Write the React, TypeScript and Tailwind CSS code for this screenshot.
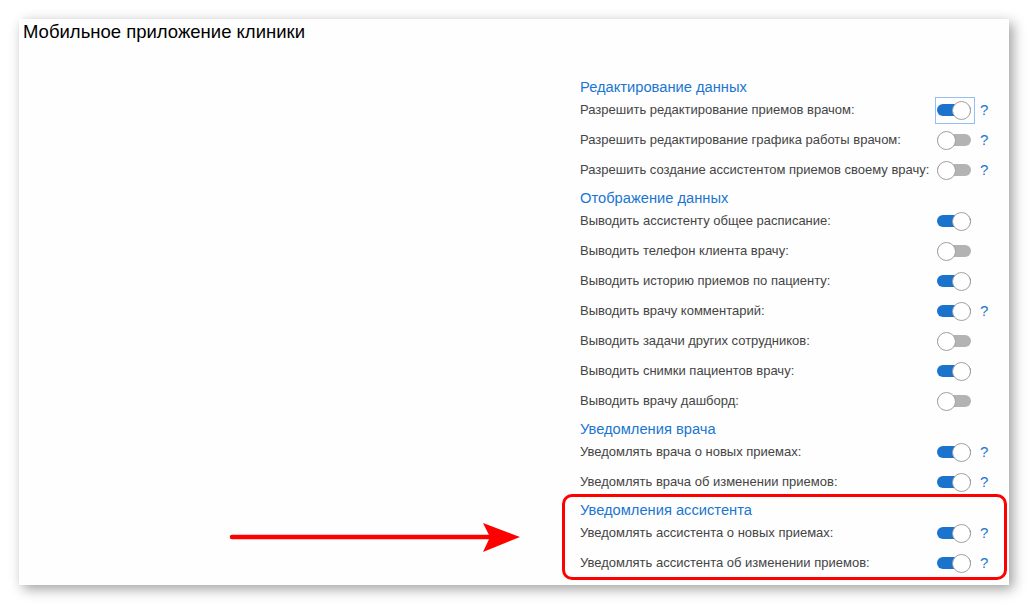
import React from 'react';

interface SettingRow {
    label: string;
    on: boolean;
    help?: boolean;
    focused?: boolean;
}

interface SettingSection {
    title: string;
    rows: SettingRow[];
}

const sections: SettingSection[] = [
    {
        title: 'Редактирование данных',
        rows: [
            { label: 'Разрешить редактирование приемов врачом:', on: true, help: true, focused: true },
            { label: 'Разрешить редактирование графика работы врачом:', on: false, help: true },
            { label: 'Разрешить создание ассистентом приемов своему врачу:', on: false, help: true },
        ],
    },
    {
        title: 'Отображение данных',
        rows: [
            { label: 'Выводить ассистенту общее расписание:', on: true },
            { label: 'Выводить телефон клиента врачу:', on: false },
            { label: 'Выводить историю приемов по пациенту:', on: true },
            { label: 'Выводить врачу комментарий:', on: true, help: true },
            { label: 'Выводить задачи других сотрудников:', on: false },
            { label: 'Выводить снимки пациентов врачу:', on: true },
            { label: 'Выводить врачу дашборд:', on: false },
        ],
    },
    {
        title: 'Уведомления врача',
        rows: [
            { label: 'Уведомлять врача о новых приемах:', on: true, help: true },
            { label: 'Уведомлять врача об изменении приемов:', on: true, help: true },
        ],
    },
    {
        title: 'Уведомления ассистента',
        rows: [
            { label: 'Уведомлять ассистента о новых приемах:', on: true, help: true },
            { label: 'Уведомлять ассистента об изменении приемов:', on: true, help: true },
        ],
    },
];

function Toggle({ on, focused }: { on: boolean; focused?: boolean }) {
    return (
        <div
            className={`w-[40px] h-[27px] flex items-center pl-[1px] border ${
                focused ? 'border-[#93bff2]' : 'border-transparent'
            }`}
        >
            <div
                className={`w-[34px] h-[12px] rounded-full flex items-center ${
                    on ? 'bg-[#1a73cc] justify-end' : 'bg-[#b3b3b3] justify-start'
                }`}
            >
                <div className="w-[19px] h-[19px] shrink-0 rounded-full bg-white border border-[#a0a0a0]" />
            </div>
        </div>
    );
}

export default function App() {
    return (
        <div className="relative w-[1030px] h-[606px] bg-white overflow-hidden font-['Liberation_Sans',Arial,sans-serif]">
            <div className="pt-[19px] pl-[19px]">
                <div className="w-[990px] h-[566px] bg-[#fefefe] shadow-[4px_4px_12px_rgba(0,0,0,0.38)]">
                    <div className="px-[4px] pt-[2px] text-[18.5px] leading-[22px] text-black">
                        Мобильное приложение клиники
                    </div>

                    <div className="ml-[561px] mt-[31px] w-[410px]">
                        {sections.map((section) => (
                            <div key={section.title}>
                                <div className="h-[21px] pt-[4px] text-[14.7px] leading-[18px] text-[#1a76d2]">
                                    {section.title}
                                </div>
                                {section.rows.map((row) => (
                                    <div key={row.label} className="h-[30px] flex items-center">
                                        <div className="flex-1 text-[13px] text-[#444]">{row.label}</div>
                                        <Toggle on={row.on} focused={row.focused} />
                                        <div className="w-[15px] pl-[5px] text-[15px] text-[#1a76d2]">
                                            {row.help ? '?' : ''}
                                        </div>
                                    </div>
                                ))}
                            </div>
                        ))}
                    </div>
                </div>
            </div>

            {/* annotation: red frame round the assistant block */}
            <div className="absolute left-[562px] top-[494px] w-[445px] h-[86px] border-[3px] border-[#ff0000] rounded-[10px]" />

            {/* annotation: red arrow */}
            <svg className="absolute left-[228px] top-[520px]" width="296" height="36" viewBox="0 0 296 36">
                <line x1="4" y1="17" x2="262" y2="17" stroke="#ff0000" strokeWidth="4.5" strokeLinecap="round" />
                <polygon points="292,17 255,3 262,17 255,32" fill="#ff0000" />
            </svg>
        </div>
    );
}
